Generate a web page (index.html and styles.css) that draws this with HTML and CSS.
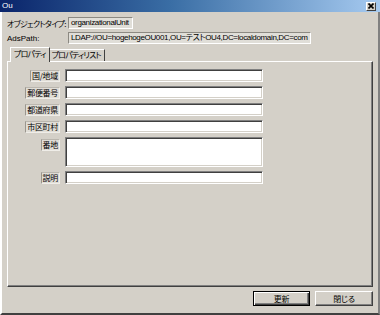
FILE: index.html
```html
<!DOCTYPE html>
<html lang="ja">
<head>
    <meta charset="UTF-8">
    <meta name="viewport" content="width=device-width, initial-scale=1.0">
    <title>Ou</title>
    <link rel="stylesheet" href="styles.css">
</head>
<body>
    <div class="titlebar">
        <span class="title">Ou</span>
        <span class="close">
            <svg width="6" height="6" viewBox="0 0 6 6"><path d="M0.5 0.5 L5.5 5.5 M5.5 0.5 L0.5 5.5" stroke="#000" stroke-width="1.6"/></svg>
        </span>
    </div>
    <div class="frame">
        <div class="info">
            <div class="info-row">
                <span class="info-label kana">オブジェクトタイプ:</span>
                <span class="value short">organizationalUnit</span>
            </div>
            <div class="info-row">
                <span class="info-label">AdsPath:</span>
                <span class="value long">LDAP://OU=hogehogeOU001,OU=テストOU4,DC=localdomain,DC=com</span>
            </div>
        </div>

        <div class="tabs">
            <div class="tab active">プロパティ</div>
            <div class="tab">プロパティリスト</div>
        </div>

        <div class="panel">
            <div class="fields">
                <span class="field-label">国/地域</span>
                <input type="text" class="field">
                <span class="field-label">郵便番号</span>
                <input type="text" class="field">
                <span class="field-label">都道府県</span>
                <input type="text" class="field">
                <span class="field-label">市区町村</span>
                <input type="text" class="field">
                <span class="field-label top">番地</span>
                <textarea class="field area"></textarea>
                <span class="field-label">説明</span>
                <input type="text" class="field">
            </div>
        </div>

        <div class="buttons">
            <button class="button default">更新</button>
            <button class="button">閉じる</button>
        </div>
    </div>
</body>
</html>
```

FILE: styles.css
```css
*{
    box-sizing: border-box;
}
body{
    margin: 0;
    width: 380px;
    height: 315px;
    background-color: #d4d0c8;
    font-family: "Liberation Sans", "Noto Sans CJK JP", sans-serif;
    font-size: 8px;
    color: #000;
    overflow: hidden;
}
.titlebar{
    height: 12px;
    display: flex;
    align-items: center;
    justify-content: space-between;
    padding: 0 4px 0 2px;
    background: linear-gradient(to right, #0a246a, #3a6ea5 45%, #a6caf0);
}
.title{
    color: #fff;
    font-size: 8px;
    line-height: 12px;
}
.close{
    width: 10px;
    height: 9px;
    display: flex;
    align-items: center;
    justify-content: center;
    background-color: #d4d0c8;
    border-top: 1px solid #fff;
    border-left: 1px solid #fff;
    border-right: 1px solid #404040;
    border-bottom: 1px solid #404040;
}
.frame{
    height: 303px;
    display: flex;
    flex-direction: column;
    padding: 5px 5px 0 5px;
    border-left: 2px solid #fff;
    border-right: 2px solid #808080;
    border-bottom: 2px solid #404040;
}
.info{
    display: flex;
    flex-direction: column;
    gap: 3px;
}
.info-row{
    display: flex;
    align-items: center;
    height: 12px;
}
.info-label{
    width: 61px;
    flex-shrink: 0;
    white-space: nowrap;
}
.info-label.kana{
    font-family: "Noto Sans CJK JP", sans-serif;
    font-feature-settings: "palt";
    letter-spacing: -0.7px;
}
.value{
    height: 12px;
    line-height: 10px;
    padding: 0 2px;
    white-space: nowrap;
    overflow: hidden;
    background-color: #e0ded8;
    border-top: 1px solid #8c8982;
    border-left: 1px solid #8c8982;
    border-right: 1px solid #fff;
    border-bottom: 1px solid #fff;
    font-family: "Liberation Sans", "Noto Sans CJK JP", sans-serif;
    font-feature-settings: "palt";
    letter-spacing: -0.35px;
}
.short{
    width: 65px;
}
.long{
    width: 243px;
}
.tabs{
    display: flex;
    align-items: flex-end;
    height: 14px;
    margin-top: 3px;
    padding-left: 3px;
    font-family: "Noto Sans CJK JP", sans-serif;
    font-feature-settings: "palt";
    letter-spacing: -0.8px;
}
.tab{
    height: 12px;
    line-height: 10px;
    padding: 0 3px 0 2px;
    background-color: #d4d0c8;
    border-top: 1px solid #fff;
    border-left: 1px solid #fff;
    border-right: 1px solid #404040;
    white-space: nowrap;
}
.tab.active{
    position: relative;
    z-index: 1;
    height: 15px;
    margin-bottom: -1px;
    padding: 1px 3px 0 3px;
}
.tab + .tab{
    border-left: none;
}
.panel{
    height: 226px;
    border-top: 1px solid #fff;
    border-left: 1px solid #fff;
    border-right: 1px solid #404040;
    border-bottom: 1px solid #404040;
    box-shadow: inset -1px -1px 0 #808080;
    padding-top: 7px;
}
.fields{
    display: grid;
    grid-template-columns: 52px 198px;
    grid-template-rows: 13px 13px 13px 13px 30px 13px;
    column-gap: 5px;
    row-gap: 4px;
}
.field-label{
    justify-self: end;
    align-self: center;
    height: 12px;
    line-height: 10px;
    padding: 0 1px;
    font-family: "Noto Sans CJK JP", sans-serif;
    font-feature-settings: "palt";
    letter-spacing: -0.3px;
    white-space: nowrap;
    background-color: #e0ddd6;
    border-top: 1px solid #bab6ae;
    border-left: 1px solid #9a968e;
    border-right: 1px solid #efede8;
    border-bottom: 1px solid #efede8;
}
.field-label.top{
    align-self: start;
    margin-top: 2px;
}
.field{
    appearance: none;
    margin: 0;
    width: 198px;
    height: 13px;
    padding: 0;
    background-color: #fff;
    border-top: 1px solid #808080;
    border-left: 1px solid #808080;
    border-right: 1px solid #fff;
    border-bottom: 1px solid #fff;
    box-shadow: inset 1px 1px 0 #404040, inset -1px -1px 0 #d4d0c8;
    resize: none;
    outline: none;
}
.field.area{
    height: 30px;
}
.buttons{
    display: flex;
    justify-content: flex-end;
    gap: 5px;
    margin-top: 4px;
}
.button{
    width: 58px;
    height: 15px;
    padding: 0;
    margin: 0;
    font-family: "Noto Sans CJK JP", sans-serif;
    font-size: 8px;
    font-feature-settings: "palt";
    letter-spacing: -0.3px;
    line-height: 11px;
    color: #000;
    background-color: #d4d0c8;
    border-top: 1px solid #fff;
    border-left: 1px solid #fff;
    border-right: 1px solid #404040;
    border-bottom: 1px solid #404040;
    box-shadow: inset -1px -1px 0 #808080;
}
.button.default{
    width: 57px;
    border: 1px solid #000;
    box-shadow: inset 1px 1px 0 #fff, inset -1px -1px 0 #404040, inset -2px -2px 0 #808080;
}
```
